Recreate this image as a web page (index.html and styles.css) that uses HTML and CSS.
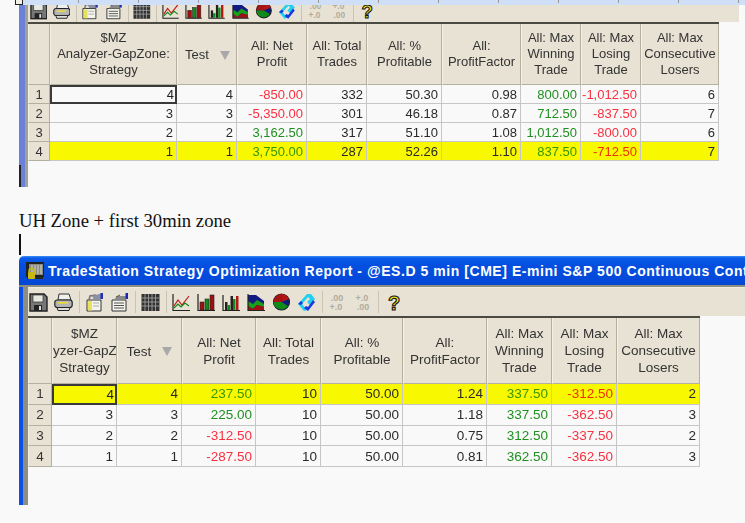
FILE: index.html
```html
<!DOCTYPE html>
<html lang="en">
<head>
<meta charset="utf-8">
<title>TradeStation Strategy Optimization Report</title>
<link rel="stylesheet" href="styles.css">
</head>
<body>
<svg class="defs" width="0" height="0" aria-hidden="true">
  <symbol id="i-save" viewBox="0 0 19 19">
    <path d="M1 1h14l3 3v14H1z" fill="#777" stroke="#222" stroke-width="1.4"/>
    <rect x="4" y="2" width="10" height="7" fill="#e8e8e0" stroke="#333" stroke-width=".7"/>
    <rect x="5" y="12" width="8" height="6" fill="#222"/>
    <rect x="10" y="13" width="2" height="4" fill="#ddd"/>
  </symbol>
  <symbol id="i-print" viewBox="0 0 19 19">
    <path d="M5 1h10l2 6H4z" fill="#f0f0f0" stroke="#333"/>
    <rect x=".8" y="7" width="17.4" height="7.5" rx="2.5" fill="#b4b4b4" stroke="#222" stroke-width="1.2"/>
    <rect x="4" y="9" width="10" height="1.6" fill="#eede30"/>
    <path d="M3 14.5h13l-1 3H4z" fill="#ddd" stroke="#222"/>
  </symbol>
  <symbol id="i-doc" viewBox="0 0 19 19">
    <path d="M2 7h14v11H2z" fill="#f4f4ec" stroke="#333"/>
    <rect x="3" y="8" width="4" height="9.5" fill="#e8e060"/>
    <path d="M4 7l1-4 6-1" fill="none" stroke="#777" stroke-width="1.6"/>
    <path d="M7 3l9-2.5 0 6-7 0z" fill="#8a90a8"/>
    <rect x="15.5" y="0" width="2.5" height="6" fill="#2030b0"/>
    <path d="M8 10h6M8 13h6" stroke="#aaa"/>
  </symbol>
  <symbol id="i-doc2" viewBox="0 0 19 19">
    <path d="M2 7h14v11H2z" fill="#f4f4ec" stroke="#333"/>
    <path d="M4 10h10M4 12.500h10M4 15h10" stroke="#555"/>
    <path d="M4 7l3-4h9v4z" fill="#8a8a8a"/>
    <rect x="15.500" y="0" width="2.500" height="6" fill="#1a28b0"/>
    <path d="M6 4l4-2" stroke="#555"/>
  </symbol>
  <symbol id="i-grid" viewBox="0 0 19 19">
    <rect x=".5" y="1" width="18" height="17" fill="#333"/>
    <path d="M4 1v17M7.500 1v17M11 1v17M14.500 1v17M.5 5h18M.5 9h18M.5 13h18" stroke="#aaa" stroke-width=".8"/>
  </symbol>
  <symbol id="i-line" viewBox="0 0 19 19">
    <path d="M1 1v16.500h17" fill="none" stroke="#222" stroke-width="1.200"/>
    <path d="M2 13l4-6 4 5 7-9" fill="none" stroke="#c01818" stroke-width="1.200"/>
    <path d="M2 15l4-4 3 3 4-4 4 3" fill="none" stroke="#108a18" stroke-width="1.200"/>
  </symbol>
  <symbol id="i-bars" viewBox="0 0 19 19">
    <path d="M1 1v16.500h17" fill="none" stroke="#222" stroke-width="1.200"/>
    <rect x="3" y="9" width="4" height="8" fill="#a01010" stroke="#222" stroke-width=".6"/>
    <rect x="8" y="6" width="4" height="11" fill="#108a18" stroke="#222" stroke-width=".6"/>
    <rect x="13" y="2" width="4" height="15" fill="#a01010" stroke="#222" stroke-width=".6"/>
  </symbol>
  <symbol id="i-bars2" viewBox="0 0 19 19">
    <path d="M1 2v15.500h17" fill="none" stroke="#222" stroke-width="1.200"/>
    <rect x="3" y="9" width="2.500" height="8" fill="#222"/>
    <rect x="5.500" y="12" width="2.500" height="5" fill="#108a18"/>
    <rect x="8.500" y="3" width="2.500" height="14" fill="#222"/>
    <rect x="11" y="6" width="2.500" height="11" fill="#108a18"/>
    <rect x="14" y="3" width="2.500" height="14" fill="#b01818"/>
  </symbol>
  <symbol id="i-area" viewBox="0 0 19 19">
    <path d="M1 2h8l8 6v9H1z" fill="#101a80"/>
    <path d="M1 8l5 3 4-4 7 4v3L10 12l-4 4-5-3z" fill="#18a018"/>
    <path d="M1 13l5 3 4-4 7 2v3H1z" fill="#a01010"/>
    <path d="M1 1v16.500h17" fill="none" stroke="#222" stroke-width="1.200"/>
  </symbol>
  <symbol id="i-pie" viewBox="0 0 19 19">
    <circle cx="9.500" cy="9" r="8" fill="#0e1a80" stroke="#222" stroke-width="1.200"/>
    <path d="M9.500 9L10 1a8 8 0 0 1 7 5z" fill="#b01818"/>
    <path d="M1.500 9a8 8 0 0 1 8.500-8L9.500 9z" fill="#a81414"/>
    <path d="M1.500 9L9.500 9L16 13a8 8 0 0 1-14.500-4z" fill="#108a18"/>
  </symbol>
  <symbol id="i-swirl" viewBox="0 0 19 19">
    <path d="M10 1l4 0 4 5-5 6-3-3 3-3-2-2-6 7 5 6-3 1-6-7z" fill="#20d0f0"/>
    <path d="M18 9l-7 9-4-3 2-2 2 1 5-7zM1 11l3-3 2 2-2 2z" fill="#1838e0"/>
  </symbol>
  <symbol id="i-dec1" viewBox="0 0 19 19">
    <text class="dec-text" x="9" y="8">.00</text>
    <text class="dec-text" x="8" y="17">+.0</text>
  </symbol>
  <symbol id="i-dec2" viewBox="0 0 19 19">
    <text class="dec-text" x="9" y="8">+.0</text>
    <text class="dec-text" x="10" y="17">.00</text>
  </symbol>
  <symbol id="i-help" viewBox="0 0 19 19">
    <text class="help-text" x="10" y="17">?</text>
  </symbol>
</svg>

<div class="page">
  <div class="ruler"><span class="handle"></span></div>

  <section class="win win-a">
    <div class="win-body">
      <div class="win-inner">
        <div class="toolbar">
          <svg class="icon"><use href="#i-save"/></svg>
          <svg class="icon"><use href="#i-print"/></svg>
          <i class="sep"></i>
          <svg class="icon"><use href="#i-doc"/></svg>
          <svg class="icon"><use href="#i-doc2"/></svg>
          <i class="sep"></i>
          <svg class="icon"><use href="#i-grid"/></svg>
          <i class="sep"></i>
          <svg class="icon"><use href="#i-line"/></svg>
          <svg class="icon"><use href="#i-bars"/></svg>
          <svg class="icon"><use href="#i-bars2"/></svg>
          <svg class="icon"><use href="#i-area"/></svg>
          <svg class="icon"><use href="#i-pie"/></svg>
          <svg class="icon"><use href="#i-swirl"/></svg>
          <i class="sep"></i>
          <svg class="icon"><use href="#i-dec1"/></svg>
          <svg class="icon"><use href="#i-dec2"/></svg>
          <i class="sep"></i>
          <svg class="icon"><use href="#i-help"/></svg>
        </div>
        <div class="grid">
          <div class="hd corner"></div>
          <div class="hd"><span>$MZ</span><span>Analyzer-GapZone:</span><span>Strategy</span></div>
          <div class="hd hd-sort"><span>Test</span><i class="tri"></i></div>
          <div class="hd"><span>All: Net</span><span>Profit</span></div>
          <div class="hd"><span>All: Total</span><span>Trades</span></div>
          <div class="hd"><span>All: %</span><span>Profitable</span></div>
          <div class="hd"><span>All:</span><span>ProfitFactor</span></div>
          <div class="hd"><span>All: Max</span><span>Winning</span><span>Trade</span></div>
          <div class="hd"><span>All: Max</span><span>Losing</span><span>Trade</span></div>
          <div class="hd"><span>All: Max</span><span>Consecutive</span><span>Losers</span></div>

          <div class="rh">1</div><div class="c sel">4</div><div class="c">4</div><div class="c neg">-850.00</div><div class="c">332</div><div class="c">50.30</div><div class="c">0.98</div><div class="c pos">800.00</div><div class="c neg">-1,012.50</div><div class="c">6</div>
          <div class="rh">2</div><div class="c">3</div><div class="c">3</div><div class="c neg">-5,350.00</div><div class="c">301</div><div class="c">46.18</div><div class="c">0.87</div><div class="c pos">712.50</div><div class="c neg">-837.50</div><div class="c">7</div>
          <div class="rh">3</div><div class="c">2</div><div class="c">2</div><div class="c pos">3,162.50</div><div class="c">317</div><div class="c">51.10</div><div class="c">1.08</div><div class="c pos">1,012.50</div><div class="c neg">-800.00</div><div class="c">6</div>
          <div class="rh">4</div><div class="c hi">1</div><div class="c hi">1</div><div class="c hi pos">3,750.00</div><div class="c hi">287</div><div class="c hi">52.26</div><div class="c hi">1.10</div><div class="c hi pos">837.50</div><div class="c hi neg">-712.50</div><div class="c hi">7</div>
        </div>
      </div>
    </div>
  </section>

  <p class="note">UH Zone + first 30min zone</p>
  <div class="caret"></div>

  <section class="win win-b">
    <header class="titlebar">
      <svg class="app-icon" viewBox="0 0 18 18" aria-hidden="true">
        <rect x="0" y="0" width="18" height="15" fill="#222"/>
        <rect x="3" y="2" width="14" height="11" fill="#8a8a80"/>
        <path d="M6 3v9M9 3v9M12 3v9M15 3v9" stroke="#d8d8d0" stroke-width="1"/>
        <rect x="1" y="15" width="16" height="2" fill="#2a2a20"/>
        <rect x="2" y="10" width="7" height="7" rx="1" fill="#c8b810"/>
        <circle cx="5.500" cy="9" r="2.500" fill="none" stroke="#c8b810" stroke-width="1.500"/>
      </svg>
      <h1 class="title">TradeStation Strategy Optimization Report - @ES.D 5 min [CME] E-mini S&amp;P 500 Continuous Contract [Jun07]</h1>
    </header>
    <div class="win-body">
      <div class="win-inner">
        <div class="toolbar">
          <svg class="icon"><use href="#i-save"/></svg>
          <svg class="icon"><use href="#i-print"/></svg>
          <i class="sep"></i>
          <svg class="icon"><use href="#i-doc"/></svg>
          <svg class="icon"><use href="#i-doc2"/></svg>
          <i class="sep"></i>
          <svg class="icon"><use href="#i-grid"/></svg>
          <i class="sep"></i>
          <svg class="icon"><use href="#i-line"/></svg>
          <svg class="icon"><use href="#i-bars"/></svg>
          <svg class="icon"><use href="#i-bars2"/></svg>
          <svg class="icon"><use href="#i-area"/></svg>
          <svg class="icon"><use href="#i-pie"/></svg>
          <svg class="icon"><use href="#i-swirl"/></svg>
          <i class="sep"></i>
          <svg class="icon"><use href="#i-dec1"/></svg>
          <svg class="icon"><use href="#i-dec2"/></svg>
          <i class="sep"></i>
          <svg class="icon"><use href="#i-help"/></svg>
        </div>
        <div class="grid">
          <div class="hd corner"></div>
          <div class="hd"><span>$MZ</span><span>Analyzer-GapZone:</span><span>Strategy</span></div>
          <div class="hd hd-sort"><span>Test</span><i class="tri"></i></div>
          <div class="hd"><span>All: Net</span><span>Profit</span></div>
          <div class="hd"><span>All: Total</span><span>Trades</span></div>
          <div class="hd"><span>All: %</span><span>Profitable</span></div>
          <div class="hd"><span>All:</span><span>ProfitFactor</span></div>
          <div class="hd"><span>All: Max</span><span>Winning</span><span>Trade</span></div>
          <div class="hd"><span>All: Max</span><span>Losing</span><span>Trade</span></div>
          <div class="hd"><span>All: Max</span><span>Consecutive</span><span>Losers</span></div>

          <div class="rh">1</div><div class="c hi sel">4</div><div class="c hi">4</div><div class="c hi pos">237.50</div><div class="c hi">10</div><div class="c hi">50.00</div><div class="c hi">1.24</div><div class="c hi pos">337.50</div><div class="c hi neg">-312.50</div><div class="c hi">2</div>
          <div class="rh">2</div><div class="c">3</div><div class="c">3</div><div class="c pos">225.00</div><div class="c">10</div><div class="c">50.00</div><div class="c">1.18</div><div class="c pos">337.50</div><div class="c neg">-362.50</div><div class="c">3</div>
          <div class="rh">3</div><div class="c">2</div><div class="c">2</div><div class="c neg">-312.50</div><div class="c">10</div><div class="c">50.00</div><div class="c">0.75</div><div class="c pos">312.50</div><div class="c neg">-337.50</div><div class="c">2</div>
          <div class="rh">4</div><div class="c">1</div><div class="c">1</div><div class="c neg">-287.50</div><div class="c">10</div><div class="c">50.00</div><div class="c">0.81</div><div class="c pos">362.50</div><div class="c neg">-362.50</div><div class="c">3</div>
        </div>
      </div>
    </div>
  </section>
</div>
</body>
</html>
```

FILE: styles.css
```css
* { box-sizing: border-box; }
html, body { margin: 0; padding: 0; }
body {
  width: 745px;
  height: 523px;
  overflow: hidden;
  background: #f9f9f9;
  color: #222;
  font-family: "Liberation Sans", Arial, sans-serif;
}
.defs { position: absolute; }

.page {
  display: flex;
  flex-direction: column;
  padding-left: 19px;
}

/* document ruler strip at the very top */
.ruler {
  position: relative;
  height: 5px;
  margin-left: 1px;
  background:
    repeating-linear-gradient(90deg, transparent 0 57px, #9a9a9a 57px 58px, transparent 58px 60px) 1px 0 / 100% 3px no-repeat,
    #cfdff7;
}
.handle {
  position: absolute;
  left: -5px;
  top: -3px;
  width: 8px;
  height: 8px;
  background: #f4f0e4;
  border: 1px solid #222;
}

/* windows */
.win { display: flex; flex-direction: column; filter: blur(.3px); }
.win-body { flex: 1; display: flex; flex-direction: column; position: relative; }
.win-inner { flex: 1; display: flex; flex-direction: column; }

.win-a { width: 720px; height: 182px; }
.win-a .win-body { border-left: 6px solid #6b80d8; }
.win-a .win-body::before {
  content: "";
  position: absolute;
  left: -6px;
  bottom: 0;
  width: 2px;
  height: 22px;
  background: #222;
}
.win-a .win-inner { border-left: 3px solid #a2a294; }

.win-b { width: 726px; height: 249px; }
.win-b .win-body { border-left: 4px solid #0a50e4; }
.win-b .win-inner { border-left: 5px solid #8e8e80; }

/* title bar */
.titlebar {
  flex: none;
  height: 31px;
  display: flex;
  align-items: center;
  gap: 4px;
  padding: 0 0 2px 7px;
  overflow: hidden;
  border-radius: 5px 0 0 0;
  background: linear-gradient(#3a90f8 0, #0b5ce8 2px, #0550e0 8px, #0448d8 26px, #0446cc 29px, #8e8e80 29px);
}
.app-icon { flex: none; width: 18px; height: 18px; }
.title {
  margin: 0;
  font-size: 14px;
  font-weight: bold;
  letter-spacing: .55px;
  white-space: nowrap;
  color: #fff;
}

/* toolbars */
.toolbar {
  flex: none;
  display: flex;
  overflow: hidden;
  background: #e8e2d4;
}
.win-a .toolbar { height: 17px; gap: 5.5px; padding-left: 1.5px; }
.win-b .toolbar { height: 29px; gap: 6px; padding: 5px 0 0 1px; border-top: 1px solid #f2eee4; }
.icon { flex: none; display: block; }
.win-a .icon { width: 17.7px; height: 17.7px; margin-top: -3px; }
.win-b .icon { width: 19px; height: 19px; }
.sep {
  flex: none;
  width: 1px;
  margin-right: -1px;
  background: #c8c4b4;
  align-self: stretch;
}
.win-b .sep { margin-top: -2px; margin-bottom: 3px; }
.dec-text {
  font: 9px "Liberation Sans", Arial, sans-serif;
  font-weight: bold;
  fill: #b0ac9e;
  text-anchor: middle;
}
.help-text {
  font: bold 20px "Liberation Sans", Arial, sans-serif;
  fill: #f0e020;
  stroke: #111;
  stroke-width: 1.1px;
  text-anchor: middle;
}

/* data grid */
.grid {
  display: grid;
  align-self: flex-start;
  border-top: 2px solid #4a4a40;
}
.win-a .grid {
  grid-template-columns: 22px 127px 60px 70px 60px 75px 79px 60px 60px 78px;
  grid-template-rows: 61px repeat(4, 19px);
  font-size: 13px;
}
.win-b .grid {
  grid-template-columns: 24px 65px 65px 74px 65px 82px 84px 65px 65px 83px;
  grid-template-rows: 66px repeat(4, 20.75px);
  font-size: 13.5px;
}
.win-a .hd { line-height: 16px; }
.win-b .hd { line-height: 17px; }

.hd {
  display: flex;
  flex-direction: column;
  align-items: center;
  justify-content: center;
  overflow: hidden;
  text-align: center;
  color: #333;
  background: #e8e2d4;
  border-right: 1px solid #b4b0a0;
  border-bottom: 1px solid #b4b0a0;
  border-left: 1px solid #f4f0e6;
}
.hd span { white-space: nowrap; flex: none; }
.hd-sort { flex-direction: row; gap: 11px; padding-top: 2px; }
.win-a .hd-sort { padding-left: 1px; }
.tri {
  width: 0;
  height: 0;
  border-left: 5px solid transparent;
  border-right: 5px solid transparent;
  border-top: 9px solid #a8a8a8;
}

.rh {
  display: flex;
  align-items: center;
  justify-content: center;
  color: #333;
  background: #e8e2d4;
  border-right: 1px solid #b4b0a0;
  border-bottom: 1px solid #b4b0a0;
  border-left: 1px solid #f4f0e6;
}
.c {
  display: flex;
  align-items: center;
  justify-content: flex-end;
  padding-right: 3px;
  color: #2a2a2a;
  border-right: 1px solid #c6c6c6;
  border-bottom: 1px solid #c6c6c6;
}
.pos { color: #1f9020; }
.neg { color: #f83040; }
.hi { background: #f8f800; }
.hi.pos { color: #3a9600; }
.hi.neg { color: #f03000; }
.c.sel { border: 2px solid #3a3a3a; color: #222; padding-right: 1px; }

/* document text between the windows */
.note {
  margin: 23px 0 0;
  height: 21px;
  line-height: 21px;
  font-family: "Liberation Serif", "Times New Roman", serif;
  font-size: 18.67px;
  color: #111;
}
.caret {
  flex: none;
  width: 2px;
  height: 21px;
  margin: 3px 0 1px;
  background: #111;
}
```
